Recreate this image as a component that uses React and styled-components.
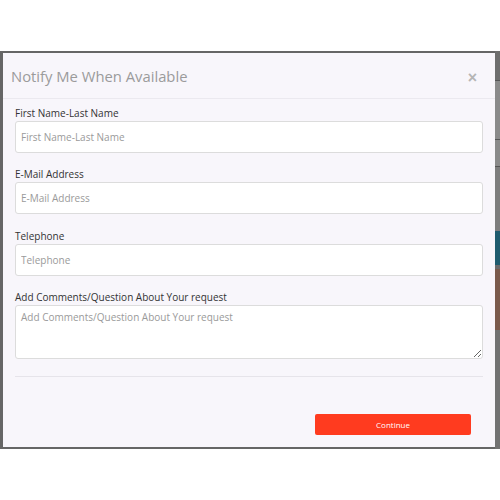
import React from "react";
import styled, { createGlobalStyle } from "styled-components";

const Global = createGlobalStyle`
  html, body {
    margin: 0;
    padding: 0;
    background: #ffffff;
    font-family: "Open Sans", "Liberation Sans", sans-serif;
  }
  * { box-sizing: border-box; }
`;

const Page = styled.div`
  width: 500px;
  height: 500px;
  padding-top: 51px;
  background: #ffffff;
`;

const Frame = styled.div`
  display: flex;
  height: 398px;
  background: #666666;
  padding: 2px 0 2px 3px;
`;

const Modal = styled.div`
  width: 492px;
  background: #f8f6fb;
  display: flex;
  flex-direction: column;
`;

const Header = styled.div`
  height: 46px;
  display: flex;
  align-items: center;
  justify-content: space-between;
  padding: 0 18px 0 8px;
  border-bottom: 1px solid #ebe9ef;
`;

const Title = styled.h4`
  margin: 0;
  font-size: 14.8px;
  font-weight: 400;
  color: #9b9b9b;
`;

const Close = styled.button`
  border: 0;
  background: none;
  padding: 0;
  margin-top: 4px;
  color: #b5b5b5;
  font-size: 16px;
  font-weight: 700;
  line-height: 1;
  font-family: "Liberation Sans", sans-serif;
`;

const Body = styled.div`
  padding: 6.5px 12px 0 12px;
  display: flex;
  flex-direction: column;
`;

const Group = styled.div`
  display: flex;
  flex-direction: column;
  margin-bottom: ${(p) => p.$mb ?? 14.5}px;
`;

const Label = styled.label`
  font-size: 10px;
  line-height: 14px;
  color: #333333;
  margin-bottom: 1px;
`;

const Input = styled.input`
  height: 32px;
  width: 100%;
  border: 1px solid #dcdcdc;
  border-radius: 3px;
  background: #ffffff;
  padding: 0 5px;
  font-family: inherit;
  font-size: 10px;
  color: #333;
  outline: none;
  &::placeholder { color: #9a9a9a; }
`;

const TextArea = styled.textarea`
  height: 54px;
  width: 100%;
  border: 1px solid #dcdcdc;
  border-radius: 3px;
  background: #ffffff;
  padding: 4px 5px;
  font-family: inherit;
  font-size: 10px;
  color: #333;
  outline: none;
  resize: vertical;
  &::placeholder { color: #9a9a9a; }
`;

const Divider = styled.hr`
  margin: 17px 0 0 0;
  border: 0;
  border-top: 1px solid #e6e4ea;
`;

const Footer = styled.div`
  display: flex;
  justify-content: flex-end;
  padding: 37px 24px 0 0;
`;

const Button = styled.button`
  width: 156px;
  height: 21px;
  border: 0;
  border-radius: 2px;
  background: #ff3b1f;
  color: #ffffff;
  font-family: inherit;
  font-size: 8px;
  cursor: pointer;
`;

const Strip = styled.div`
  flex: 1;
  display: flex;
  flex-direction: column;
  margin: -2px 0;
`;

const Block = styled.div`
  height: ${(p) => p.$h}px;
  background: ${(p) => p.$c};
  border-bottom: ${(p) => (p.$line ? "1px solid #555" : "0")};
`;

const fields = [
  { label: "First Name-Last Name" },
  { label: "E-Mail Address" },
  { label: "Telephone" },
];

export default function App() {
  return (
    <Page>
      <Global />
      <Frame>
        <Modal>
          <Header>
            <Title>Notify Me When Available</Title>
            <Close aria-label="close">×</Close>
          </Header>
          <Body>
            {fields.map((f) => (
              <Group key={f.label}>
                <Label>{f.label}</Label>
                <Input placeholder={f.label} />
              </Group>
            ))}
            <Group $mb={0}>
              <Label>Add Comments/Question About Your request</Label>
              <TextArea placeholder="Add Comments/Question About Your request" />
            </Group>
            <Divider />
          </Body>
          <Footer>
            <Button>Continue</Button>
          </Footer>
        </Modal>
        <Strip>
          <Block $h={30} $c="#6e6e6e" $line />
          <Block $h={60} $c="#8a8a8a" $line />
          <Block $h={27} $c="#8a8a8a" $line />
          <Block $h={64} $c="#7d7d7d" />
          <Block $h={35} $c="#1f5c6e" />
          <Block $h={4} $c="#6a6a6a" />
          <Block $h={61} $c="#7a5a4c" />
          <Block $h={120} $c="#727272" />
        </Strip>
      </Frame>
    </Page>
  );
}
